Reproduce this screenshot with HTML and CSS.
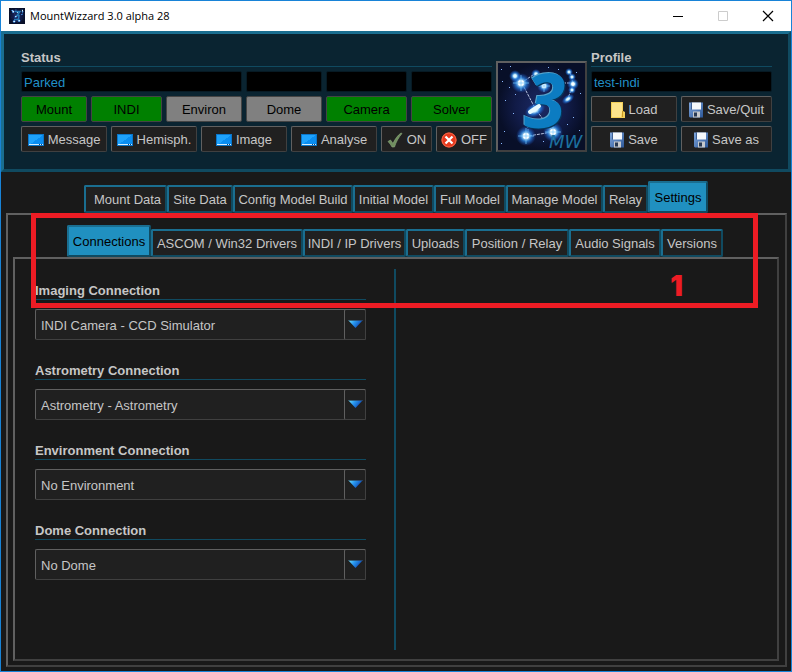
FILE: index.html
```html
<!DOCTYPE html>
<html lang="en">
<head>
<meta charset="utf-8">
<title>MountWizzard 3.0 alpha 28</title>
<link rel="stylesheet" href="styles.css">
</head>
<body>
<svg class="defs" aria-hidden="true">
  <defs>
    <linearGradient id="g-arrow" x1="0" y1="0" x2="1" y2="0.4"><stop offset="0" stop-color="#7df0ff"/><stop offset="0.45" stop-color="#2a9af0"/><stop offset="1" stop-color="#0a3fb0"/></linearGradient>
    <linearGradient id="g-screen" x1="0" y1="0" x2="1" y2="1"><stop offset="0.5" stop-color="#1ea2fb"/><stop offset="0.5" stop-color="#0a8df0"/></linearGradient>
    <linearGradient id="g-disk" x1="0" y1="0" x2="1" y2="1"><stop offset="0" stop-color="#7fa6dc"/><stop offset="1" stop-color="#2c5798"/></linearGradient>
    <radialGradient id="g-sky"><stop offset="0" stop-color="#1c2a66"/><stop offset="0.6" stop-color="#111b47"/><stop offset="1" stop-color="#080f28"/></radialGradient>
    <radialGradient id="g-star"><stop offset="0" stop-color="#fff"/><stop offset="0.25" stop-color="#c8f0ff"/><stop offset="0.55" stop-color="#2a86e8" stop-opacity="0.75"/><stop offset="1" stop-color="#1a4fc0" stop-opacity="0"/></radialGradient>
  </defs>
  <symbol id="i-screen" viewBox="0 0 16 12"><rect width="16" height="12" fill="#0b76c9"/><rect x="1" y="1" width="14" height="10" fill="url(#g-screen)"/><path d="M1 10.500h14" stroke="#d8efff"/><path d="M11 10.500h1M13 10.500h1" stroke="#0a3f78"/></symbol>
  <symbol id="i-check" viewBox="0 0 16 16"><path d="M1 9.500 3.500 8 6 11.500C8 7 10.500 3.500 14 1L15 1.500C11.500 5.500 9 10 7.500 15H5C4 13 2.500 11 1 9.500Z" fill="#6f8f5e" stroke="#8fa87f" stroke-width=".6"/></symbol>
  <symbol id="i-off" viewBox="0 0 16 16"><circle cx="8" cy="8" r="7.600" fill="#e8391c"/><circle cx="8" cy="8" r="7" fill="none" stroke="#f4684b"/><path d="M4.500 4.500l7 7M11.500 4.500l-7 7" stroke="#fff" stroke-width="2.200"/></symbol>
  <symbol id="i-note" viewBox="0 0 14 16"><path d="M0 0h12v9l2 1v6H0Z" fill="#f3cf57"/><path d="M1 1h10v9l-1 5H1Z" fill="#fde48c"/><path d="M11.500 9v6" stroke="#c99a25"/></symbol>
  <symbol id="i-disk" viewBox="0 0 14 15"><path d="M0 0h14v15H1L0 14Z" fill="url(#g-disk)"/><rect x="3" y="0" width="9" height="7" fill="#f5f8fc"/><path d="M2.500 0v7" stroke="#3c5f94"/><rect x="4" y="9" width="7" height="6" fill="#c6c9cc"/><rect x="5" y="10" width="3" height="4" fill="#283a55"/></symbol>
  <symbol id="i-arrow" viewBox="0 0 15 8"><path d="M0 0h15L7.500 8Z" fill="url(#g-arrow)"/><path d="M0 .5h15" stroke="#2b3a4a" opacity=".7"/></symbol>
  <symbol id="i-sky" viewBox="0 0 87 87">
    <rect width="87" height="87" fill="url(#g-sky)"/>
    <g fill="#8ab8ff"><path d="M3 6h1v1h-1zM4 18h1v1h-1zM12 3h1v1h-1zM50 4h1v1h-1zM78 9h1v1h-1zM82 30h1v1h-1zM7 37h1v1h-1zM15 50h1v1h-1zM6 68h1v1h-1zM75 54h1v1h-1zM69 61h1v1h-1zM81 67h1v1h-1zM45 78h1v1h-1zM17 31h1v1h-1zM60 6h1v1h-1zM3 80h1v1h-1zM52 65h1v1h-1zM11 24h1v1h-1z"/></g>
    <path d="M23 20 38 10M26 24 38 47M30 62V73L55 69 38 47M65 20h10M75 20 72 9M76 20 70 35" fill="none" stroke="#b7c3e0" stroke-dasharray="3 1" stroke-width="1"/>
    <g fill="url(#g-star)"><circle cx="23" cy="20" r="10"/><circle cx="17" cy="13" r="6"/><circle cx="38" cy="11" r="5"/><circle cx="46" cy="23" r="7"/><ellipse cx="37" cy="47" rx="11" ry="7" transform="rotate(-28 37 47)"/><circle cx="28" cy="73" r="10"/><circle cx="55" cy="69" r="10"/><circle cx="71" cy="9" r="4"/><circle cx="74" cy="14" r="4"/><circle cx="75" cy="21" r="6"/><circle cx="74" cy="27" r="4"/><ellipse cx="70" cy="36" rx="7" ry="4" transform="rotate(-35 70 36)"/></g>
    <g fill="#fff"><circle cx="23" cy="20" r="3"/><circle cx="46" cy="23" r="2"/><circle cx="28" cy="73" r="3"/><circle cx="55" cy="69" r="3"/><circle cx="75" cy="21" r="1.500"/></g>
    <path d="M23 12v16M15 20h16M28 65v16M20 73h16M55 61v16M47 69h16M46 17v12M40 23h12" stroke="#75c9ff" stroke-width=".7"/>
  </symbol>
</svg>

<div class="window">
  <header class="titlebar">
    <svg class="app-icon" viewBox="0 0 16 16" aria-hidden="true"><use href="#i-sky" width="16" height="16"/><path d="M6 3.500h5L8 7.500h2L9.500 11.500H5" fill="none" stroke="#2479b5" stroke-width="1.500"/></svg>
    <h1>MountWizzard 3.0 alpha 28</h1>
    <button class="win-btn" aria-label="Minimize"><svg viewBox="0 0 10 10"><path d="M0 5.500h10" stroke="#000"/></svg></button>
    <button class="win-btn" aria-label="Maximize" disabled><svg viewBox="0 0 10 10"><path d="M.5 .5h9v9h-9Z" fill="none" stroke="#ccc"/></svg></button>
    <button class="win-btn" aria-label="Close"><svg viewBox="0 0 10 10"><path d="M0 0l10 10M10 0 0 10" stroke="#000" stroke-width="1.200"/></svg></button>
  </header>

  <section class="overview">
    <div class="group">
      <h2>Status</h2>
      <div class="row states">
        <input class="field wide" aria-label="Mount status" value="Parked" readonly>
        <input class="field" aria-label="Dome status" readonly>
        <input class="field" aria-label="Camera status" readonly>
        <input class="field" aria-label="Solver status" readonly>
      </div>
      <div class="row states">
        <button class="lamp on">Mount</button>
        <button class="lamp on">INDI</button>
        <button class="lamp">Environ</button>
        <button class="lamp">Dome</button>
        <button class="lamp on">Camera</button>
        <button class="lamp on">Solver</button>
      </div>
      <div class="row actions">
        <button class="btn"><svg class="ic-screen"><use href="#i-screen"/></svg>Message</button>
        <button class="btn"><svg class="ic-screen"><use href="#i-screen"/></svg>Hemisph.</button>
        <button class="btn"><svg class="ic-screen"><use href="#i-screen"/></svg>Image</button>
        <button class="btn"><svg class="ic-screen"><use href="#i-screen"/></svg>Analyse</button>
        <button class="btn"><svg class="ic-round"><use href="#i-check"/></svg>ON</button>
        <button class="btn"><svg class="ic-round"><use href="#i-off"/></svg>OFF</button>
      </div>
    </div>
    <svg class="logo" viewBox="0 0 87 87" role="img" aria-label="MountWizzard 3">
      <use href="#i-sky" width="87" height="87"/>
      <text class="logo-three" x="26" y="65">3</text>
      <path d="M32 49 41 43" stroke="#e8faff" stroke-width="4" stroke-linecap="round"/>
      <text class="logo-mw" x="51" y="85">MW</text>
    </svg>
    <div class="group">
      <h2>Profile</h2>
      <div class="row"><input class="field" aria-label="Profile name" value="test-indi" readonly></div>
      <div class="row pair">
        <button class="btn"><svg class="ic-file"><use href="#i-note"/></svg>Load</button>
        <button class="btn"><svg class="ic-file"><use href="#i-disk"/></svg>Save/Quit</button>
      </div>
      <div class="row pair">
        <button class="btn"><svg class="ic-file"><use href="#i-disk"/></svg>Save</button>
        <button class="btn"><svg class="ic-file"><use href="#i-disk"/></svg>Save as</button>
      </div>
    </div>
  </section>

  <main class="workspace">
    <nav class="tabs main-tabs" aria-label="Main">
      <button class="tab first">Mount Data</button>
      <button class="tab">Site Data</button>
      <button class="tab">Config Model Build</button>
      <button class="tab">Initial Model</button>
      <button class="tab">Full Model</button>
      <button class="tab">Manage Model</button>
      <button class="tab">Relay</button>
      <button class="tab active">Settings</button>
    </nav>
    <div class="pane outer">
      <nav class="tabs sub-tabs" aria-label="Settings">
        <button class="tab active">Connections</button>
        <button class="tab">ASCOM / Win32 Drivers</button>
        <button class="tab">INDI / IP Drivers</button>
        <button class="tab">Uploads</button>
        <button class="tab">Position / Relay</button>
        <button class="tab">Audio Signals</button>
        <button class="tab">Versions</button>
      </nav>
      <div class="pane inner">
        <div class="connections">
          <div class="setting">
            <label for="imaging">Imaging Connection</label>
            <div class="combo"><select id="imaging"><option>INDI Camera - CCD Simulator</option></select><span class="drop"><svg><use href="#i-arrow"/></svg></span></div>
          </div>
          <div class="setting">
            <label for="astrometry">Astrometry Connection</label>
            <div class="combo"><select id="astrometry"><option>Astrometry - Astrometry</option></select><span class="drop"><svg><use href="#i-arrow"/></svg></span></div>
          </div>
          <div class="setting">
            <label for="environment">Environment Connection</label>
            <div class="combo"><select id="environment"><option>No Environment</option></select><span class="drop"><svg><use href="#i-arrow"/></svg></span></div>
          </div>
          <div class="setting">
            <label for="dome">Dome Connection</label>
            <div class="combo"><select id="dome"><option>No Dome</option></select><span class="drop"><svg><use href="#i-arrow"/></svg></span></div>
          </div>
        </div>
        <div class="side"></div>
      </div>
      <div class="callout"><span>1</span></div>
    </div>
  </main>
</div>
</body>
</html>
```
FILE: styles.css
```css
* { box-sizing: border-box; }

body {
  margin: 0;
  background: #191919;
  color: #c6c6c6;
  font: 13px/16px "Liberation Sans", Arial, sans-serif;
}

button, input, select { font: inherit; color: inherit; margin: 0; }

.defs { position: absolute; width: 0; height: 0; }

.window {
  display: flex;
  flex-direction: column;
  min-height: 100vh;
  border: 1px solid #1883d7;
}

/* Title bar */
.titlebar {
  display: flex;
  align-items: center;
  height: 30px;
  padding: 0 1px 0 8px;
  background: #fff;
}
.app-icon { width: 16px; height: 16px; }
.titlebar h1 {
  flex: 1;
  margin: 0 0 0 5px;
  color: #000;
  font: 11px/16px "Open Sans", "Noto Sans", sans-serif;
}
.win-btn {
  width: 45px;
  height: 28px;
  padding: 0;
  border: 0;
  background: none;
}
.win-btn svg { display: block; width: 10px; height: 10px; margin: auto; overflow: visible; }

/* Status and profile */
.overview {
  display: grid;
  grid-template-columns: 471fr 91px 181fr;
  align-items: end;
  gap: 4px;
  padding: 16px 16px 17px 17px;
  border: 3px solid;
  border-color: #1a6e90 #104a60 #104a60 #1a6e90;
  background: #0a2431;
}
.group { display: flex; flex-direction: column; gap: 4px; min-width: 0; }
.group h2 {
  margin: 0;
  height: 17px;
  border-bottom: 1px solid #104a60;
  font-size: 13px;
  line-height: 16px;
}
.row { display: grid; gap: 4px; }
.states { grid-template-columns: 66fr 71fr 76fr 76fr 81fr 81fr; }
.actions { grid-template-columns: 86fr 86fr 86fr 86fr 51fr 56fr; }
.pair { grid-template-columns: 86fr 91fr; }

.field {
  width: 100%;
  min-width: 0;
  height: 21px;
  padding: 1px 2px 0;
  border: 1px solid #071a24;
  border-radius: 2px;
  background: #000;
  color: #2090c8;
}
.wide { grid-column: span 3; }

.lamp, .btn {
  display: flex;
  align-items: center;
  justify-content: center;
  gap: 4px;
  height: 26px;
  min-width: 0;
  padding: 1px 0 0;
  border: 1px solid;
  border-radius: 2px;
  white-space: nowrap;
}
.lamp { border-color: #444; background: #808080; color: #000; }
.lamp.on { background: #008000; }
.btn { border-color: #606060 #404040 #404040 #606060; background: #202020; }
.ic-screen { width: 16px; height: 12px; }
.ic-round { width: 16px; height: 16px; }
.ic-file { width: 14px; height: 16px; }

.logo {
  width: 91px;
  height: 91px;
  border: 2px solid;
  border-color: #606060 #404040 #404040 #606060;
}
.logo-three {
  fill: #0c7cc2;
  font: italic bold 75px "Open Sans", sans-serif;
  filter: drop-shadow(-1px -1px 0 #56a4cc) drop-shadow(1px 1px 0 #06365a);
}
.logo-mw { fill: #1c6f9f; font: italic 18px "DejaVu Sans", sans-serif; }

/* Tabs */
.workspace {
  display: flex;
  flex: 1;
  flex-direction: column;
  padding: 9px 4px 4px 5px;
}
.tabs { display: grid; align-items: end; }
.main-tabs {
  grid-template-columns: 83fr 66fr 120fr 81fr 72fr 97fr 45fr 60fr;
  margin: 0 79px 0 78px;
}
.sub-tabs {
  grid-template-columns: 84fr 152fr 103fr 59fr 104fr 92fr 62fr;
  margin: 0 56px 0 54px;
}
.tab {
  height: 28px;
  min-width: 0;
  padding: 1px 0 0;
  border: 2px solid;
  border-color: #1a6e90 #104a60 #104a60 #1a6e90;
  border-radius: 2px;
  background: #202020;
  white-space: nowrap;
}
.tab.first { padding-left: 4px; }
.tab.active { height: 32px; background: #2090c0; color: #000; }

.pane { border: 2px solid; border-color: #606060 #404040 #404040 #606060; }
.outer {
  position: relative;
  display: flex;
  flex: 1;
  flex-direction: column;
  padding: 10px 6px 4px 5px;
}
.inner {
  display: grid;
  flex: 1;
  grid-template-columns: 359fr 383fr;
  padding: 10px 0 9px 20px;
}

/* Connection settings */
.connections { display: flex; flex-direction: column; gap: 23px; padding: 14px 28px 0 0; }
.setting { display: flex; flex-direction: column; gap: 9px; }
.setting label {
  height: 17px;
  border-bottom: 1px solid #104a60;
  font-weight: bold;
  line-height: 16px;
}
.combo { position: relative; }
.combo select {
  display: block;
  width: 100%;
  height: 31px;
  padding: 2px 26px 0 5px;
  appearance: none;
  border: 1px solid;
  border-color: #606060 #404040 #404040 #606060;
  border-radius: 2px;
  background: #202020;
}
.drop {
  position: absolute;
  top: 0;
  right: 0;
  bottom: 0;
  display: grid;
  place-items: center;
  width: 22px;
  padding-bottom: 1px;
  border: 1px solid;
  border-color: #606060 #404040 #404040 #606060;
  border-radius: 2px;
  pointer-events: none;
}
.drop svg { width: 15px; height: 8px; }
.side { border-left: 2px solid #104a60; }

/* Numbered highlight over the settings tabs */
.callout {
  position: absolute;
  top: -2px;
  left: 23px;
  right: 27px;
  height: 95px;
  border: 5px solid #ed1c24;
  color: #ed1c24;
  pointer-events: none;
}
.callout span {
  position: absolute;
  right: 70px;
  bottom: 2px;
  font: 900 28px/30px Inter, "Liberation Sans", Arial, sans-serif;
}
```
